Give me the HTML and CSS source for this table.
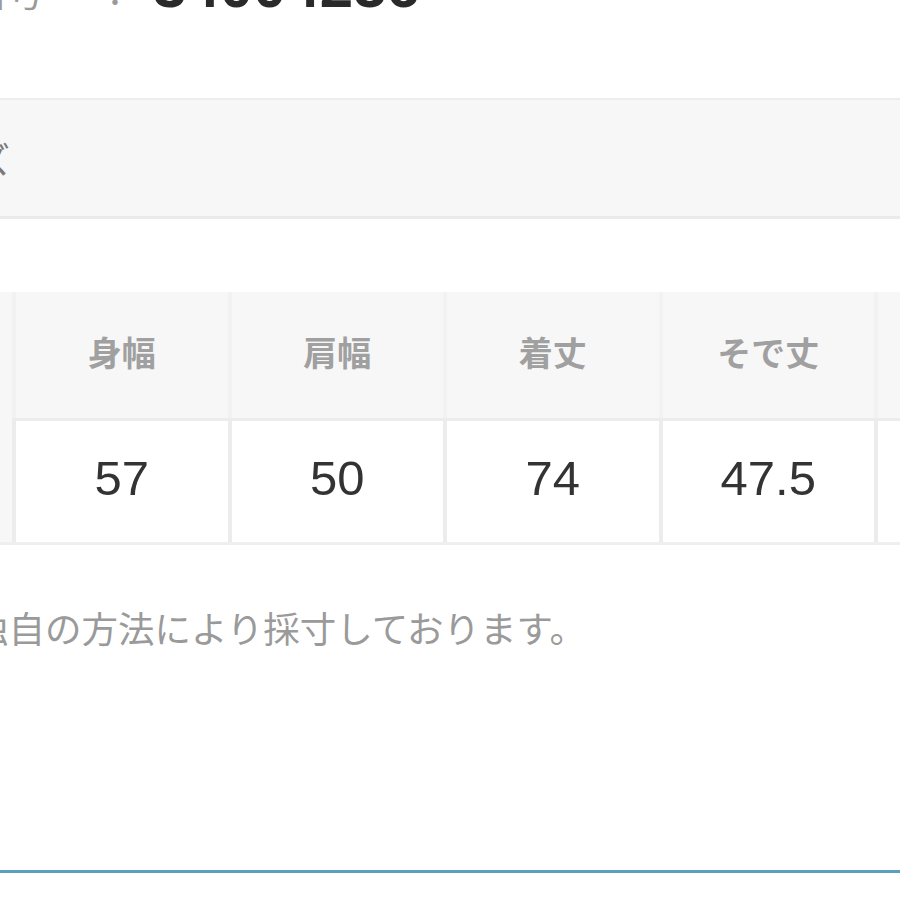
FILE: index.html
```html
<!DOCTYPE html>
<html lang="ja">
<head>
<meta charset="utf-8">
<title>サイズ</title>
<link rel="stylesheet" href="styles.css">
</head>
<body>
<div class="page">
  <div class="id-row">
    <span class="id-label">番号</span>
    <span class="id-colon">：</span>
    <span class="id-value">34004256</span>
  </div>

  <div class="size-bar">
    <span class="size-title">サイズ</span>
  </div>

  <div class="size-table">
    <div class="cell side"></div>
    <div class="cell head">身幅</div>
    <div class="cell head">肩幅</div>
    <div class="cell head">着丈</div>
    <div class="cell head">そで丈</div>
    <div class="cell head"></div>
    <div class="cell val">57</div>
    <div class="cell val">50</div>
    <div class="cell val">74</div>
    <div class="cell val">47.5</div>
    <div class="cell val"></div>
  </div>

  <p class="note">独自の方法により採寸しております。</p>

  <div class="rule"></div>
</div>
</body>
</html>
```

FILE: styles.css
```css
html, body {
  margin: 0;
  padding: 0;
  background: #ffffff;
}

body {
  width: 900px;
  height: 900px;
  overflow: hidden;
  font-family: "Noto Sans CJK JP", "Liberation Sans", sans-serif;
}

.page {
  width: 900px;
}

.id-row {
  display: flex;
  align-items: baseline;
  height: 60px;
  line-height: 60px;
  margin-top: -43px;
  white-space: nowrap;
}

.id-label {
  font-size: 36px;
  color: #9a9a9a;
  margin-left: -28px;
  width: 72px;
}

.id-colon {
  font-size: 36px;
  color: #9a9a9a;
  margin-left: 53px;
  width: 36px;
}

.id-value {
  font-family: "Liberation Sans", Arial, sans-serif;
  font-size: 60px;
  font-weight: 700;
  color: #2a2a2a;
  margin-left: 20px;
}

.size-bar {
  margin-top: 81px;
  height: 116px;
  background: #f7f7f7;
  border-top: 2px solid #ededed;
  border-bottom: 3px solid #ebebeb;
  display: flex;
  align-items: center;
  overflow: hidden;
}

.size-title {
  font-size: 36px;
  color: #7a7a7a;
  margin-left: -97px;
  white-space: nowrap;
}

.size-table {
  margin-top: 73px;
  display: grid;
  grid-template-columns: 12px repeat(5, 211.5px);
  grid-template-rows: 126px 121px;
  column-gap: 4px;
  row-gap: 3px;
  background: linear-gradient(to bottom, #f2f2f2 0, #f2f2f2 126px, #ececec 126px, #ececec 100%);
  border-bottom: 3px solid #efefef;
  width: 1100px;
}

.cell {
  display: flex;
  align-items: center;
  justify-content: center;
}

.side {
  grid-row: 1 / span 2;
  background: #f7f7f7;
}

.head {
  background: #f7f7f7;
  color: #a0a0a0;
  font-size: 34px;
  font-weight: 700;
  padding-bottom: 8px;
}

.val {
  background: #ffffff;
  color: #333333;
  font-family: "Liberation Sans", Arial, sans-serif;
  font-size: 49px;
  padding-bottom: 7px;
}

.note {
  margin: 58px 0 0 -28px;
  font-size: 36.5px;
  line-height: 50px;
  color: #9a9a9a;
  white-space: nowrap;
}

.rule {
  margin-top: 217px;
  height: 3px;
  background: #5a9fbb;
}
```
